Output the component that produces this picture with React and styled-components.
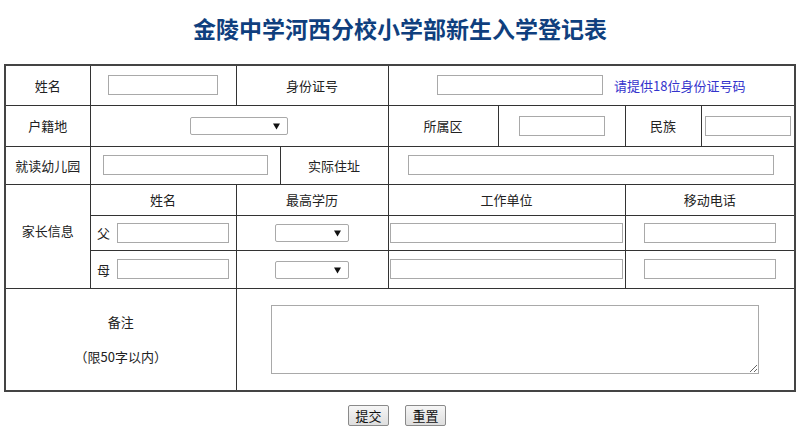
import React from "react";
import styled, { createGlobalStyle } from "styled-components";

const GlobalStyle = createGlobalStyle`
  html, body {
    margin: 0;
    padding: 0;
    background: #fff;
  }
  body {
    font-family: "Noto Sans CJK SC", "Liberation Sans", sans-serif;
    font-size: 13px;
    color: #222;
  }
`;

const Page = styled.div`
  width: 800px;
`;

const Title = styled.h1`
  margin: 13px 0 21px;
  font-size: 23px;
  line-height: 30px;
  font-weight: 700;
  text-align: center;
  color: #0f3f7e;
  letter-spacing: 0;
`;

const FormTable = styled.table`
  width: 790px;
  margin: 0 auto 0 4px;
  border-collapse: collapse;
  table-layout: fixed;
  border: 2px solid #444;
`;

const Col = styled.col`
  width: ${(p) => p.w}px;
`;

const Row = styled.tr`
  height: ${(p) => p.h}px;
`;

const Cell = styled.td`
  border: 1px solid #333;
  padding: 0 0 ${(p) => p.lift || 0}px;
  text-align: center;
  vertical-align: middle;
  line-height: 17px;
  color: #222;
`;

const TextInput = styled.input`
  box-sizing: border-box;
  width: ${(p) => p.w}px;
  height: 20px;
  margin: 0;
  padding: 1px 2px;
  border: 1px solid #a9a9a9;
  border-radius: 0;
  font: inherit;
  vertical-align: middle;
  outline: none;
`;

const SelectWrap = styled.span`
  position: relative;
  display: inline-block;
  vertical-align: middle;
  line-height: 0;
`;

const Select = styled.select`
  box-sizing: border-box;
  width: ${(p) => p.w}px;
  height: 18px;
  margin: 0;
  padding: 0;
  border: 1px solid #a9a9a9;
  border-radius: 2px;
  background: #fff;
  appearance: none;
  -webkit-appearance: none;
  font: inherit;
  outline: none;
`;

const Arrow = styled.svg`
  position: absolute;
  right: 8px;
  top: 6px;
  pointer-events: none;
`;

const Hint = styled.span`
  display: inline-block;
  margin-left: 11px;
  vertical-align: middle;
  color: #3333cc;
`;

const Parent = styled.div`
  display: flex;
  align-items: center;
  justify-content: center;
  gap: 7px;
`;

const Remark = styled.div`
  line-height: 17px;
  p {
    margin: 0;
  }
  p + p {
    margin-top: 18px;
  }
`;

const TextArea = styled.textarea`
  box-sizing: border-box;
  display: block;
  margin: 0 auto;
  width: 488px;
  height: 69px;
  border: 1px solid #a9a9a9;
  border-radius: 0;
  font: inherit;
  outline: none;
`;

const Actions = styled.div`
  display: flex;
  justify-content: center;
  gap: 16px;
  padding: 13px 6px 0 0;
`;

const Button = styled.button`
  box-sizing: border-box;
  width: 41px;
  height: 21px;
  padding: 0;
  border: 1px solid #8a8a8a;
  border-radius: 2px;
  background: linear-gradient(#f6f6f6, #dedede);
  color: #111;
  font-family: "Noto Sans CJK SC", sans-serif;
  font-size: 13px;
  line-height: 17px;
`;

function Dropdown({ w }) {
  return (
    <SelectWrap>
      <Select w={w}>
        <option></option>
      </Select>
      <Arrow width="7" height="7" viewBox="0 0 7 7">
        <path d="M0 0.5 H7 L3.5 6.5 Z" fill="#111" />
      </Arrow>
    </SelectWrap>
  );
}

export default function App() {
  return (
    <Page>
      <GlobalStyle />
      <Title>金陵中学河西分校小学部新生入学登记表</Title>
      <FormTable>
        <colgroup>
          <Col w={85} />
          <Col w={146} />
          <Col w={44} />
          <Col w={108} />
          <Col w={110} />
          <Col w={127} />
          <Col w={76} />
          <Col w={94} />
        </colgroup>
        <tbody>
          <Row h={40}>
            <Cell>姓名</Cell>
            <Cell>
              <TextInput w={110} />
            </Cell>
            <Cell colSpan={2}>身份证号</Cell>
            <Cell colSpan={4}>
              <TextInput w={166} />
              <Hint>请提供18位身份证号码</Hint>
            </Cell>
          </Row>
          <Row h={41}>
            <Cell>户籍地</Cell>
            <Cell colSpan={3}>
              <Dropdown w={98} />
            </Cell>
            <Cell>所属区</Cell>
            <Cell>
              <TextInput w={86} />
            </Cell>
            <Cell>民族</Cell>
            <Cell>
              <TextInput w={86} />
            </Cell>
          </Row>
          <Row h={38}>
            <Cell>就读幼儿园</Cell>
            <Cell colSpan={2}>
              <TextInput w={165} />
            </Cell>
            <Cell>实际住址</Cell>
            <Cell colSpan={4}>
              <TextInput w={366} />
            </Cell>
          </Row>
          <Row h={31}>
            <Cell rowSpan={3} lift={12}>
              家长信息
            </Cell>
            <Cell>姓名</Cell>
            <Cell colSpan={2}>最高学历</Cell>
            <Cell colSpan={2}>工作单位</Cell>
            <Cell colSpan={2}>移动电话</Cell>
          </Row>
          {["父", "母"].map((who, i) => (
            <Row h={i === 0 ? 35 : 38} key={who}>
              <Cell>
                <Parent>
                  <span>{who}</span>
                  <TextInput w={112} />
                </Parent>
              </Cell>
              <Cell colSpan={2}>
                <Dropdown w={74} />
              </Cell>
              <Cell colSpan={2}>
                <TextInput w={233} />
              </Cell>
              <Cell colSpan={2}>
                <TextInput w={132} />
              </Cell>
            </Row>
          ))}
          <Row h={103}>
            <Cell colSpan={2}>
              <Remark>
                <p>备注</p>
                <p>（限50字以内）</p>
              </Remark>
            </Cell>
            <Cell colSpan={6}>
              <TextArea />
            </Cell>
          </Row>
        </tbody>
      </FormTable>
      <Actions>
        <Button type="button">提交</Button>
        <Button type="button">重置</Button>
      </Actions>
    </Page>
  );
}
